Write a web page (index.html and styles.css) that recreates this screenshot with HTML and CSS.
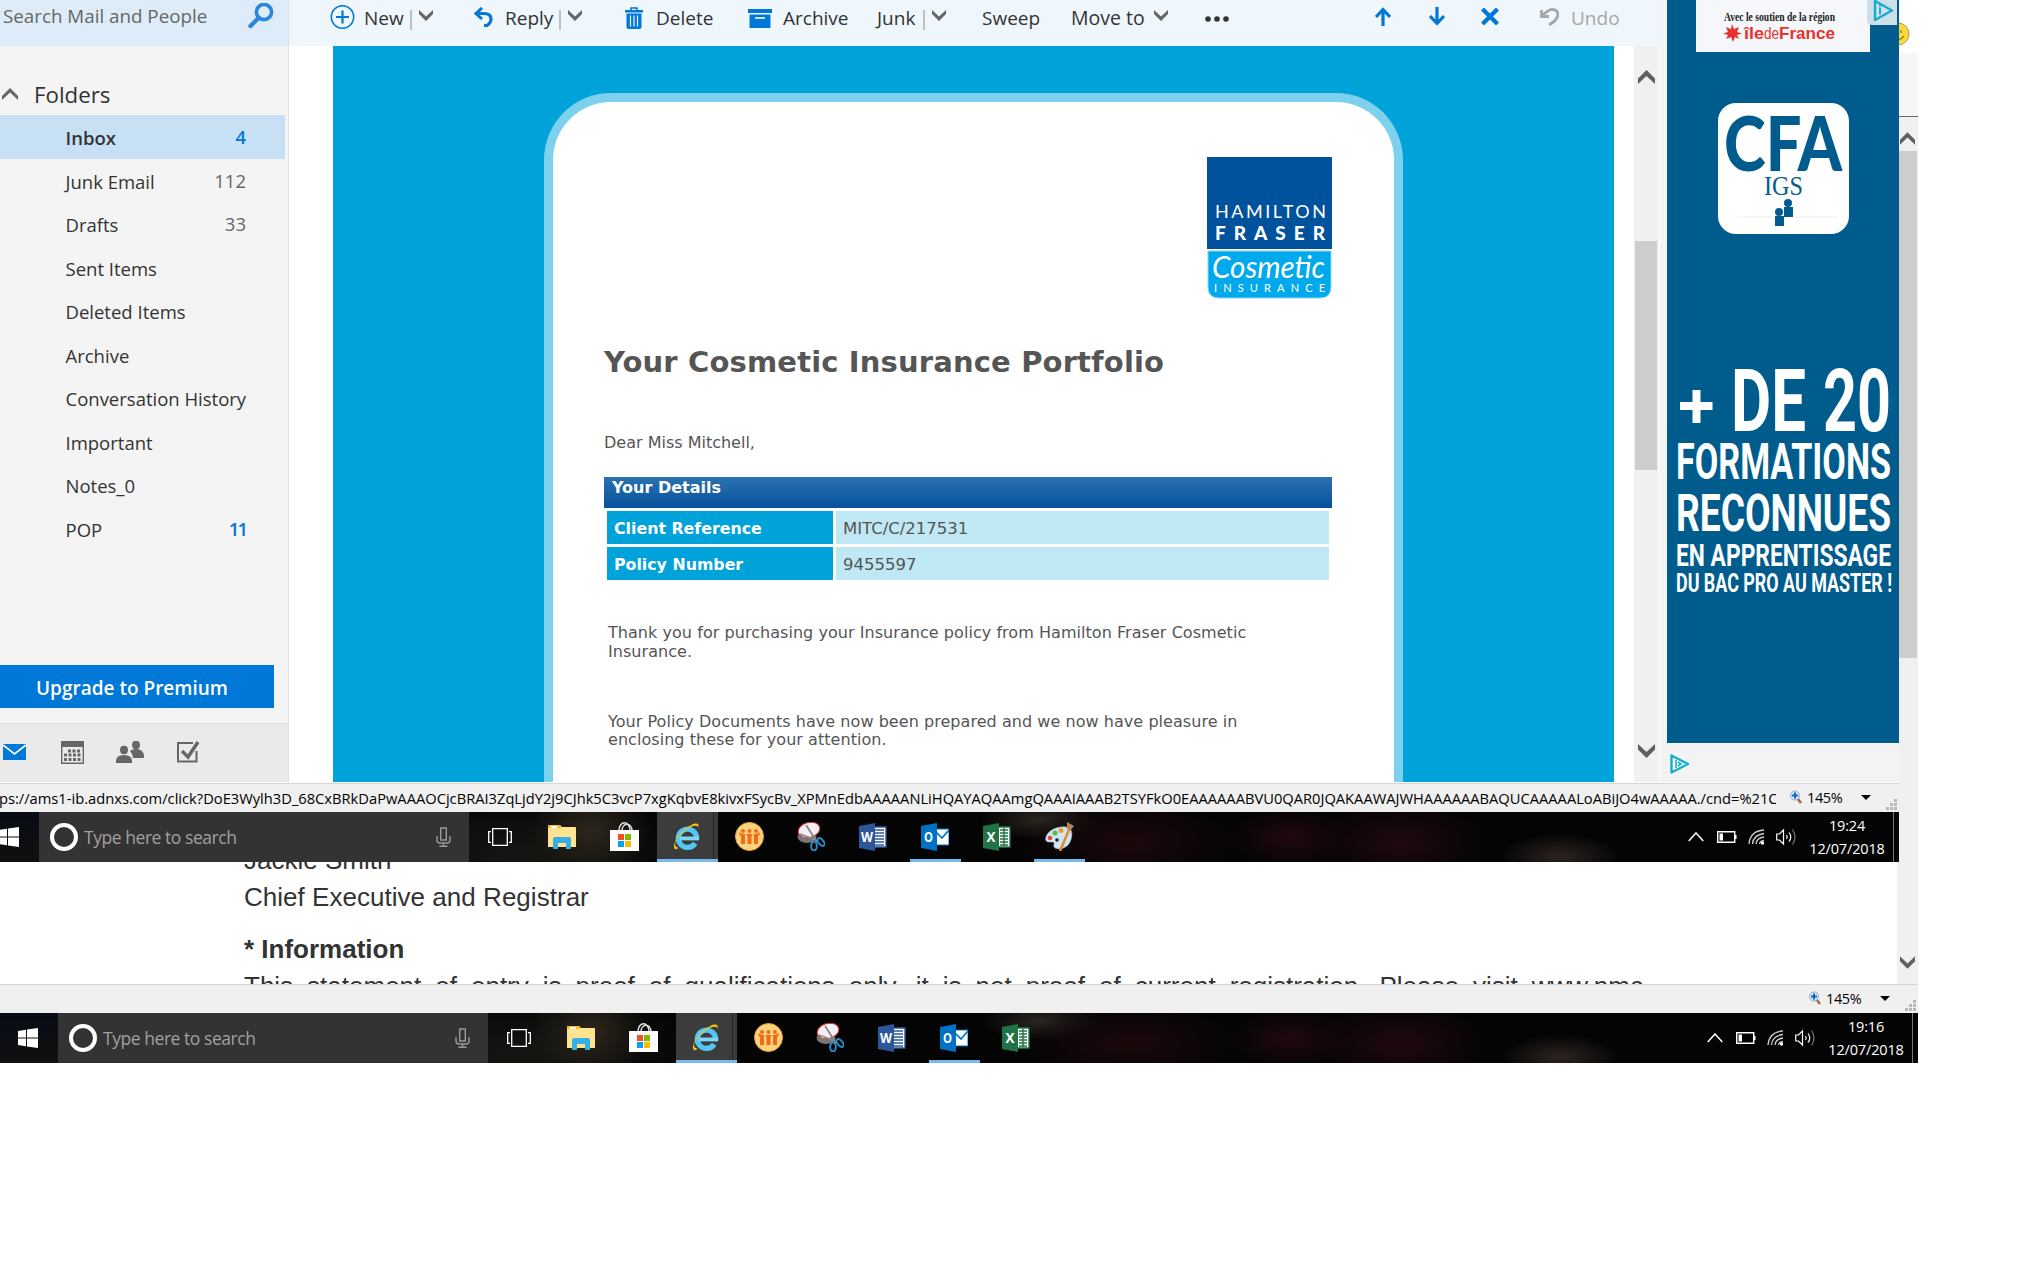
FILE: index.html
```
<!DOCTYPE html>
<html lang="en">
<head>
<meta charset="utf-8">
<title>Mail</title>
<link rel="stylesheet" href="styles.css">
</head>
<body>
<svg class="defs" width="0" height="0">
  <defs>
    <symbol id="chev-down" viewBox="0 0 14 11"><path d="M0 0L7 6.500 14 0V4L7 11 0 4z" fill="#666"/></symbol>
    <symbol id="scroll-up" viewBox="0 0 17 14"><path d="M0 8.500L8.500 0 17 8.500V14L8.500 6 0 14z" fill="#606060"/></symbol>
    <symbol id="scroll-down" viewBox="0 0 17 14"><path d="M0 5.500L8.500 14 17 5.500V0L8.500 8 0 0z" fill="#606060"/></symbol>
    <symbol id="win" viewBox="0 0 20 20"><path d="M0 3L8 1.800V9.500H0zM9 1.600L20 0V9.500H9zM0 10.500H8V18.200L0 17zM9 10.500H20V20L9 18.400z" fill="#fff"/></symbol>
    <symbol id="mic" viewBox="0 0 15 20"><path d="M4.700 1h5.600v12H4.700zM1 9v4q0 3 3 3h7q3 0 3-3V9M7.500 16v3M3.500 19.200h8" fill="none" stroke="#999" stroke-width="1.400"/></symbol>
    <symbol id="task" viewBox="0 0 24 18"><path d="M4.700.700h14.600v16.600H4.700zM3 3.700H.700v10.600H3M21 3.700h2.300v10.600H21" fill="none" stroke="#fff" stroke-width="1.300"/></symbol>
    <symbol id="folder" viewBox="0 0 28 24"><path d="M0 1q0-1 1-1h11l2 2h13q1 0 1 1v19H0z" fill="#ffe391"/><path d="M0 3V1q0-1 1-1h11l1.500 3z" fill="#f6bd2d"/><path d="M3 1h6v2H3z" fill="#fff"/><path d="M5 24V14q0-2 2-2h14q2 0 2 2v10h-5v-6h-8v6z" fill="#34b0e4"/></symbol>
    <symbol id="store" viewBox="0 0 29 29"><path d="M9 9C9-2 20-2 20 9M12 9C12 0 22 0 22 9" fill="none" stroke="#ddd" stroke-width="1.500"/><path d="M0 8h29v21H0z" fill="#fff"/><path d="M8 12h6v6H8z" fill="#f25022"/><path d="M15 12h6v6h-6z" fill="#7fba00"/><path d="M8 19h6v6H8z" fill="#00a4ef"/><path d="M15 19h6v6h-6z" fill="#ffb900"/></symbol>
    <symbol id="ie" viewBox="0 0 30 30"><path d="M25.500 17.500A9.500 9.500 0 1 0 24 22" fill="none" stroke="#53c6f6" stroke-width="5.500"/><path d="M8 17H28" stroke="#7ad8fb" stroke-width="4"/><path d="M3 28C-1 23 8 9 20 3c5-2.500 9-2 7 3C27 2 18 4 10 12S1 25 7 27q-2 1.500-4 1z" fill="#f9c513"/></symbol>
    <symbol id="people3" viewBox="0 0 29 29"><circle cx="14.500" cy="14.500" r="14" fill="#fcd27b" stroke="#e9a03a"/><g fill="#f26a1b"><circle cx="8" cy="9" r="2"/><circle cx="14.500" cy="9" r="2"/><circle cx="21" cy="9" r="2"/><path d="M4 10q2 2 6 2v10H6v-8q-2-1-2-4zM25 10q-2 2-6 2v10h4v-8q2-1 2-4zM11 12h7l-1.500 2v8h-4v-8z"/></g></symbol>
    <symbol id="snip" viewBox="0 0 28 29"><ellipse cx="10" cy="15" rx="9.500" ry="6" fill="#777"/><ellipse cx="12" cy="8" rx="11" ry="7.500" fill="#f3eff2" stroke="#c9333c" transform="rotate(-15 12 8)"/><path d="M9 3L20 20M3 12L19 18" stroke="#888" stroke-width="1.800"/><ellipse cx="17" cy="24" rx="2.800" ry="4.500" fill="none" stroke="#2b8fd0" stroke-width="1.900"/><ellipse cx="24" cy="20" rx="2.500" ry="4.500" fill="none" stroke="#2b8fd0" stroke-width="1.900" transform="rotate(-40 24 20)"/></symbol>
    <symbol id="word" viewBox="0 0 28 28"><path d="M15 4h12v20H15z" fill="#fff" stroke="#2b579a" stroke-width="1.400"/><path d="M16 7h9M16 10h9M16 13h9M16 16h9M16 19h9M16 22h9" stroke="#2b579a" stroke-width="1.300"/><path d="M0 3L16 0V28L0 25z" fill="#2b579a"/><text x="2" y="19" class="glyph" textLength="12" lengthAdjust="spacingAndGlyphs">W</text></symbol>
    <symbol id="outlook" viewBox="0 0 28 28"><path d="M14 6h14v16H14z" fill="#fff" stroke="#0072c6"/><path d="M15 9l6 6 7-8" fill="none" stroke="#0072c6" stroke-width="1.700"/><path d="M0 3L16 0V28L0 25z" fill="#0072c6"/><text x="3" y="19" class="glyph" textLength="9" lengthAdjust="spacingAndGlyphs">O</text></symbol>
    <symbol id="excel" viewBox="0 0 28 28"><path d="M15 4h12v20H15z" fill="#fff" stroke="#217346" stroke-width="1.400"/><path d="M17 7h8M17 10h8M17 13h8M17 16h8M17 19h8M17 22h8M21 5v18" stroke="#217346" stroke-width="1.400"/><path d="M0 3L16 0V28L0 25z" fill="#217346"/><text x="3.500" y="19" class="glyph" textLength="9" lengthAdjust="spacingAndGlyphs">X</text></symbol>
    <symbol id="paint" viewBox="0 0 31 29"><path d="M2 15C4 8 14 4 22 5c7 1 7 9 4 15-3 7-12 8-15 6-3-3 1-5-2-6-3 0-9 1-7-5z" fill="#cfe4f1" stroke="#9dbdd0" stroke-width=".5"/><circle cx="6" cy="16" r="2.300" fill="#e2493b"/><circle cx="11" cy="11" r="2.500" fill="#53b947"/><circle cx="17" cy="8.500" r="2.500" fill="#f49b2c"/><circle cx="13" cy="18" r="1.800" fill="#222"/><path d="M25 8L16 29" stroke="#e58b2f" stroke-width="2.500"/><path d="M23 0l7 4-4 5-3-2z" fill="#b98353"/></symbol>
    <symbol id="t-up" viewBox="0 0 16 10"><path d="M.700 9L8 1 15.300 9" fill="none" stroke="#fff" stroke-width="1.500"/></symbol>
    <symbol id="t-bat" viewBox="0 0 20 12"><path d="M.700.700h17v10.600H.700z" fill="none" stroke="#fff" stroke-width="1.400"/><path d="M18 4h1.500v4H18zM2.500 2.500h3.500v7H2.500z" fill="#fff"/></symbol>
    <symbol id="t-wifi" viewBox="0 0 18 16"><g fill="none" stroke="#ccc" stroke-width="1.300"><path d="M1 15Q2 2 16 1M4.500 15Q5 6 16 4.500M8 15Q8.500 9 16 8M11.500 15Q12 12 16 11.500"/></g><circle cx="14.500" cy="14" r="1.700" fill="#fff"/></symbol>
    <symbol id="t-vol" viewBox="0 0 20 18"><path d="M.700 6H3.500L7.500 2V16L3.500 12H.700z" fill="none" stroke="#fff" stroke-width="1.200"/><path d="M10.500 7q1.500 2 0 4M13 4.500q3.500 4.500 0 9" fill="none" stroke="#fff" stroke-width="1.200"/><path d="M16.500 1.500q5 7.500 0 15" fill="none" stroke="#777" stroke-width="1.200"/></symbol>
    <symbol id="mag" viewBox="0 0 12 14"><path d="M7.500 8.500L11 13" stroke="#a5673b" stroke-width="2.500"/><circle cx="5" cy="5.500" r="4.500" fill="#d9ecfb" stroke="#8ba9c4"/><path d="M5 2.500v6M2 5.500h6" stroke="#1761c4" stroke-width="2"/></symbol>
    <symbol id="grip" viewBox="0 0 12 12"><path d="M8 0h3v3H8zM4 4h3v3H4zM8 4h3v3H8zM0 8h3v3H0zM4 8h3v3H4zM8 8h3v3H8z" fill="#b8b8b8"/></symbol>
  </defs>
</svg>

<main class="desktop">
  <section class="window back">
    <div class="back-body">
      <article class="doc">
        <p>Jackie Smith</p>
        <p class="role">Chief Executive and Registrar</p>
        <h2>* Information</h2>
        <p class="statement">This statement of entry is proof of qualifications only, it is not proof of current registration. Please visit www.nmc</p>
      </article>
      <div class="back-rail">
        <div class="rail-top"><svg width="22" height="24" viewBox="0 0 22 24"><circle cx="-1" cy="12" r="11" fill="#fcd93c" stroke="#a89a58"/><path d="M-4 17Q1 19 5 14M2 8v3" fill="none" stroke="#8d7a20" stroke-width="1.300"/></svg></div>
        <div class="rail-tab"></div>
        <div class="rail-track"><svg class="up" width="15" height="13"><use href="#scroll-up"/></svg><div class="rail-thumb"></div><svg class="down" width="15" height="13"><use href="#scroll-down"/></svg></div>
      </div>
    </div>
    <div class="status"><span class="url"></span><svg width="12" height="14"><use href="#mag"/></svg><span class="pct">145%</span><i class="tri"></i><svg class="grip" width="12" height="12"><use href="#grip"/></svg></div>
    <footer class="taskbar">
      <div class="start"><svg width="20" height="20"><use href="#win"/></svg></div>
      <div class="search-box"><i class="ring"></i><span>Type here to search</span><svg width="15" height="20"><use href="#mic"/></svg></div>
      <div class="tiles">
        <div class="tile"><svg width="24" height="18"><use href="#task"/></svg></div>
        <div class="tile"><svg width="28" height="24"><use href="#folder"/></svg></div>
        <div class="tile"><svg width="29" height="29"><use href="#store"/></svg></div>
        <div class="tile active"><svg width="29" height="29"><use href="#ie"/></svg></div>
        <div class="tile"><svg width="29" height="29"><use href="#people3"/></svg></div>
        <div class="tile"><svg width="28" height="29"><use href="#snip"/></svg></div>
        <div class="tile"><svg width="28" height="28"><use href="#word"/></svg></div>
        <div class="tile open"><svg width="28" height="28"><use href="#outlook"/></svg></div>
        <div class="tile"><svg width="28" height="28"><use href="#excel"/></svg></div>
      </div>
      <div class="tray"><svg width="16" height="10"><use href="#t-up"/></svg><svg width="20" height="12"><use href="#t-bat"/></svg><svg width="18" height="16"><use href="#t-wifi"/></svg><svg width="20" height="18"><use href="#t-vol"/></svg></div>
      <div class="clock"><span>19:16</span><span>12/07/2018</span></div>
    </footer>
  </section>

  <section class="window front">
    <div class="mail">
      <aside class="sidebar">
        <div class="mail-search"><span>Search Mail and People</span><svg width="26" height="26" viewBox="0 0 26 26"><circle cx="16" cy="9" r="7.600" fill="none" stroke="#2b88d8" stroke-width="3.600"/><path d="M10.500 15L2.500 23" stroke="#2b88d8" stroke-width="4.400" stroke-linecap="round"/></svg></div>
        <h3 class="folders-head"><svg width="16" height="12" viewBox="0 0 16 12"><path d="M0 8L8 0 16 8V12L8 4.500 0 12z" fill="#666"/></svg>Folders</h3>
        <ul class="folders">
          <li class="selected"><span>Inbox</span><b>4</b></li>
          <li><span>Junk Email</span><em>112</em></li>
          <li><span>Drafts</span><em>33</em></li>
          <li><span>Sent Items</span></li>
          <li><span>Deleted Items</span></li>
          <li><span>Archive</span></li>
          <li><span>Conversation History</span></li>
          <li><span>Important</span></li>
          <li><span>Notes_0</span></li>
          <li><span>POP</span><b class="tight">11</b></li>
        </ul>
        <div class="upgrade">Upgrade to Premium</div>
        <nav class="apps">
          <svg width="23" height="16" viewBox="0 0 23 16"><path d="M0 0h23v16H0z" fill="#0078d7"/><path d="M0 1l11.500 9L23 1" fill="none" stroke="#fff" stroke-width="1.600"/></svg>
          <svg width="23" height="23" viewBox="0 0 23 23"><path d="M.700.700h21.600v21.600H.700z" fill="none" stroke="#666" stroke-width="1.400"/><path d="M0 0h23v6H0z" fill="#666"/><path d="M7 10h13M3 14h17M3 18.500h17" stroke="#666" stroke-width="3" stroke-dasharray="3 1.500"/></svg>
          <svg width="28" height="22" viewBox="0 0 28 22"><g fill="#666"><ellipse cx="20" cy="4" rx="4" ry="4.200"/><path d="M14 10q2-2 6-2 8 0 8 8v1H17q0-4-3-7z"/><ellipse cx="8" cy="9" rx="4" ry="4.200"/><path d="M0 22v-2q0-6 8-6t8 6v2z"/></g></svg>
          <svg width="23" height="22" viewBox="0 0 23 22"><path d="M16 2H1v18.500h18.500V10" fill="none" stroke="#666" stroke-width="2"/><path d="M5 10l6 6L21 1" fill="none" stroke="#666" stroke-width="3.400"/></svg>
        </nav>
      </aside>

      <div class="reader">
        <header class="toolbar">
          <div class="tool t-new"><svg width="25" height="24" viewBox="0 0 25 24"><circle cx="12.500" cy="12" r="11.200" fill="none" stroke="#0078d7" stroke-width="1.500"/><path d="M12.500 5.500v13M6 12h13" stroke="#0078d7" stroke-width="2.200"/></svg><span>New</span><i></i><svg class="chev" width="14" height="11"><use href="#chev-down"/></svg></div>
          <div class="tool t-reply"><svg width="20" height="20" viewBox="0 0 20 20"><path d="M2 6.500h9q7 0 7 5.500 0 4-4 6.500h-3" fill="none" stroke="#0078d7" stroke-width="3.200"/><path d="M9 1L3 6.500 9 12" fill="none" stroke="#0078d7" stroke-width="3"/></svg><span>Reply</span><i></i><svg class="chev" width="14" height="11"><use href="#chev-down"/></svg></div>
          <div class="tool t-delete"><svg width="18" height="23" viewBox="0 0 18 23"><path d="M0 3h18v2.500H0z" fill="#0078d7"/><path d="M6 3V1h6v2" fill="none" stroke="#0078d7" stroke-width="1.600"/><path d="M1.500 6.500h15v13.500q0 2-2 2h-11q-2 0-2-2z" fill="#0078d7"/><path d="M5.500 8.500v11M9 8.500v11M12.500 8.500v11" stroke="#eff6fc" stroke-width="1.200"/></svg><span>Delete</span></div>
          <div class="tool t-archive"><svg width="24" height="19" viewBox="0 0 24 19"><path d="M0 0h24v4H0zM1.500 5.500h21V19h-21z" fill="#0078d7"/><path d="M7 9h10" stroke="#fff" stroke-width="1.600"/></svg><span>Archive</span></div>
          <div class="tool t-junk"><span>Junk</span><i></i><svg class="chev" width="14" height="11"><use href="#chev-down"/></svg></div>
          <div class="tool t-sweep"><span>Sweep</span></div>
          <div class="tool t-move"><span>Move to</span><svg class="chev" width="14" height="11"><use href="#chev-down"/></svg></div>
          <div class="tool t-more"><svg width="24" height="6"><g fill="#333"><circle cx="3" cy="3" r="2.800"/><circle cx="12" cy="3" r="2.800"/><circle cx="21" cy="3" r="2.800"/></g></svg></div>
          <div class="tool t-up"><svg width="16" height="19" viewBox="0 0 16 19"><path d="M8 19V2M1 10L8 2.500l7 7.500" fill="none" stroke="#0078d7" stroke-width="3.200"/></svg></div>
          <div class="tool t-down"><svg width="16" height="19" viewBox="0 0 16 19"><path d="M8 0v17M1 9L8 16.500l7-7.500" fill="none" stroke="#0078d7" stroke-width="3.200"/></svg></div>
          <div class="tool t-close"><svg width="18" height="17" viewBox="0 0 18 17"><path d="M1.500 1l15 15M16.500 1l-15 15" stroke="#0078d7" stroke-width="4.200"/></svg></div>
          <div class="tool t-undo"><svg width="19" height="18" viewBox="0 0 19 18"><path d="M1.500 2v6.500h7.500M2 8.500Q8 1 13 1.500q6 1 4.500 7Q16 13 9 17" fill="none" stroke="#a6a6a6" stroke-width="2.800"/></svg><span>Undo</span></div>
        </header>
        <div class="reader-body">
          <div class="canvas">
            <article class="card">
              <svg class="logo" width="125" height="142" viewBox="0 0 125 142">
                <path d="M0 0h125v92H0z" fill="#00529c"/>
                <path d="M1 94h123v36q0 11-11 11H12Q1 141 1 130z" fill="#00a9ec" stroke="#8bd6f5"/>
                <g fill="#fff"><text class="lg-thin" x="8" y="61" textLength="111">HAMILTON</text><text class="lg-bold" x="8" y="83" textLength="110">FRASER</text><text class="lg-script" x="5" y="121" textLength="113" lengthAdjust="spacingAndGlyphs">Cosmetic</text><text class="lg-small" x="7" y="135" textLength="111">INSURANCE</text></g>
              </svg>
              <h1>Your Cosmetic Insurance Portfolio</h1>
              <p class="dear">Dear Miss Mitchell,</p>
              <div class="details-head">Your Details</div>
              <dl class="details"><dt>Client Reference</dt><dd>MITC/C/217531</dd><dt>Policy Number</dt><dd>9455597</dd></dl>
              <p class="para">Thank you for purchasing your Insurance policy from Hamilton Fraser Cosmetic<br>Insurance.</p>
              <p class="para second">Your Policy Documents have now been prepared and we now have pleasure in<br>enclosing these for your attention.</p>
            </article>
          </div>
          <div class="scroll"><svg class="up" width="17" height="14"><use href="#scroll-up"/></svg><div class="thumb"></div><svg class="down" width="17" height="14"><use href="#scroll-down"/></svg></div>
        </div>
      </div>

      <aside class="ads">
        <svg width="232" height="743" viewBox="0 0 232 743">
          <path d="M0 0h232v743H0z" fill="#005c8d"/>
          <path d="M29 0h174v52H29z" fill="#f5f7fa"/>
          <text class="ad-avec" x="57" y="21" textLength="111" lengthAdjust="spacingAndGlyphs">Avec le soutien de la région</text>
          <path d="M65 24l2 5 5-2-2 5 5 1.500-5 1.500 2 4-4-2-2 5-2-5-5 2 2-4-5-1.500 5-1.500-2-5 5 2z" fill="#e5332d"/>
          <g class="ad-region"><text x="77" y="39" textLength="20" lengthAdjust="spacingAndGlyphs">île</text><text class="light" x="97" y="39" textLength="15" lengthAdjust="spacingAndGlyphs">de</text><text x="112" y="39" textLength="56" lengthAdjust="spacingAndGlyphs">France</text></g>
          <path d="M200 0h30v25h-24q-6 0-6-6z" fill="#cddfe8"/>
          <path d="M208 1v19l17-9.500z" fill="none" stroke="#14aecb" stroke-width="2.400" stroke-linejoin="round"/><path d="M213 7.500v7M213 4.500v2" stroke="#14aecb" stroke-width="2"/>
          <rect x="51" y="103" width="131" height="131" rx="18" fill="#fff"/>
          <g fill="#005c8d"><text class="ad-cfa" x="57" y="171" textLength="118" lengthAdjust="spacingAndGlyphs">CFA</text><text class="ad-igs" x="97" y="195" textLength="39" lengthAdjust="spacingAndGlyphs">IGS</text><circle cx="121" cy="203" r="4"/><path d="M117 207h9v10h-9z"/><circle cx="112" cy="212" r="4"/><path d="M108 216h9v10h-9z"/></g>
          <path d="M70 217h37M127 217h44" stroke="#e7eff5"/>
          <g fill="#fff" class="ad-copy">
            <path d="M25.500 390h8v12h12v8h-12v13h-8v-13H13v-8h12.500z"/>
            <text x="64" y="431" font-size="87" textLength="75" lengthAdjust="spacingAndGlyphs">DE</text>
            <text x="156" y="431" font-size="87" textLength="68" lengthAdjust="spacingAndGlyphs">20</text>
            <text x="9" y="479" font-size="50" textLength="215" lengthAdjust="spacingAndGlyphs">FORMATIONS</text>
            <text x="9" y="531" font-size="52" textLength="215" lengthAdjust="spacingAndGlyphs">RECONNUES</text>
            <text x="9" y="566" font-size="32" textLength="215" lengthAdjust="spacingAndGlyphs">EN APPRENTISSAGE</text>
            <text x="9" y="592" font-size="26" textLength="216" lengthAdjust="spacingAndGlyphs">DU BAC PRO AU MASTER !</text>
          </g>
        </svg>
        <svg class="choices" width="20" height="20" viewBox="0 0 20 20"><path d="M1.500 1.500v17L18 10z" fill="#fff" stroke="#14aecb" stroke-width="2.400" stroke-linejoin="round"/><path d="M6 6v8M8 8l3 2-3 2" fill="none" stroke="#14aecb" stroke-width="1.600"/></svg>
      </aside>
    </div>
    <div class="status"><span class="url">ps://ams1-ib.adnxs.com/click?DoE3Wylh3D_68CxBRkDaPwAAAOCjcBRAI3ZqLjdY2j9CJhk5C3vcP7xgKqbvE8kivxFSycBv_XPMnEdbAAAAANLiHQAYAQAAmgQAAAIAAAB2TSYFkO0EAAAAAABVU0QAR0JQAKAAWAJWHAAAAAABAQUCAAAAALoABiJO4wAAAAA./cnd=%21C</span><svg width="12" height="14"><use href="#mag"/></svg><span class="pct">145%</span><i class="tri"></i><svg class="grip" width="12" height="12"><use href="#grip"/></svg></div>
    <footer class="taskbar">
      <div class="start"><svg width="20" height="20"><use href="#win"/></svg></div>
      <div class="search-box"><i class="ring"></i><span>Type here to search</span><svg width="15" height="20"><use href="#mic"/></svg></div>
      <div class="tiles">
        <div class="tile"><svg width="24" height="18"><use href="#task"/></svg></div>
        <div class="tile"><svg width="28" height="24"><use href="#folder"/></svg></div>
        <div class="tile"><svg width="29" height="29"><use href="#store"/></svg></div>
        <div class="tile active"><svg width="29" height="29"><use href="#ie"/></svg></div>
        <div class="tile"><svg width="29" height="29"><use href="#people3"/></svg></div>
        <div class="tile"><svg width="28" height="29"><use href="#snip"/></svg></div>
        <div class="tile"><svg width="28" height="28"><use href="#word"/></svg></div>
        <div class="tile open"><svg width="28" height="28"><use href="#outlook"/></svg></div>
        <div class="tile"><svg width="28" height="28"><use href="#excel"/></svg></div>
        <div class="tile open"><svg width="31" height="29"><use href="#paint"/></svg></div>
      </div>
      <div class="tray"><svg width="16" height="10"><use href="#t-up"/></svg><svg width="20" height="12"><use href="#t-bat"/></svg><svg width="18" height="16"><use href="#t-wifi"/></svg><svg width="20" height="18"><use href="#t-vol"/></svg></div>
      <div class="clock"><span>19:24</span><span>12/07/2018</span></div>
    </footer>
  </section>
</main>
</body>
</html>
```
FILE: styles.css
```
* { box-sizing: border-box; }
body { margin: 0; background: #fff; overflow: hidden; font-family: "Open Sans", "Noto Sans", sans-serif; color: #333; }
h1, h2, h3, p, ul, dl, dd { margin: 0; padding: 0; }
svg { display: block; flex: none; }
.defs { position: absolute; }
.glyph { font: 700 15px "Open Sans", sans-serif; fill: #fff; }

.desktop { position: relative; width: 2036px; height: 1280px; }
.window { position: absolute; left: 0; top: 0; display: flex; flex-direction: column; overflow: hidden; background: #fff; }
.back { width: 1918px; height: 1063px; }
.front { width: 1899px; height: 862px; }

/* document window behind */
.back-body { height: 984px; display: flex; overflow: hidden; }
.doc { width: 1897px; padding: 844px 0 0 244px; font: 26px/32px "Liberation Sans", Arial, sans-serif; color: #333; overflow: hidden; white-space: nowrap; }
.doc .role { margin-top: 5px; letter-spacing: .03px; }
.doc h2 { font-size: 26px; line-height: 32px; margin-top: 20px; }
.doc .statement { margin-top: 5px; width: 1399px; text-align: justify; text-align-last: justify; white-space: normal; height: 32px; }
.back-rail { width: 21px; display: flex; flex-direction: column; }
.rail-top { height: 53px; padding: 22px 0 0 2px; }
.rail-tab { height: 64px; background: #f6f6f6; border-bottom: 1px solid #6a6a6a; }
.rail-track { flex: 1; background: #f0f0f0; padding: 15px 1px 15px 3px; display: flex; flex-direction: column; }
.rail-thumb { height: 507px; margin: 6px 0 0 -3px; background: #cdcdcd; }
.rail-track .down { margin-top: auto; }

/* status bar */
.status { height: 29px; display: flex; align-items: center; background: #f0f0f0; border-top: 1px solid #d6d6d6; padding: 0 1px 2px 0; color: #000; flex: none; }
.url { flex: 1; overflow: hidden; white-space: nowrap; font-size: 14.700px; line-height: 24px; margin: 2px 14px 0 -1px; }
.pct { font-size: 14.500px; letter-spacing: -.4px; width: 54px; margin-left: 5px; }
.tri { width: 10px; border: 5px solid transparent; border-top-color: #000; border-bottom: 0; margin-right: 15px; }
.grip { align-self: flex-end; margin-bottom: -1px; }

/* taskbar */
.taskbar { height: 50px; display: flex; flex: none; color: #fff; background:
  radial-gradient(60px 22px at 1560px 44px, #2c2420, transparent),
  radial-gradient(90px 40px at 1400px 30px, #210811, transparent),
  radial-gradient(60px 30px at 1290px 26px, #210811, transparent),
  radial-gradient(110px 40px at 1130px 30px, #1c080b, transparent),
  radial-gradient(60px 20px at 1040px 8px, #2a2620, transparent),
  radial-gradient(60px 50px at 590px 18px, #2c261c, transparent),
  radial-gradient(200px 60px at 520px 40px, #151512, transparent), #040405; }
.start { width: 39px; display: flex; align-items: center; background: linear-gradient(#070c15, #101010); }
.front .start svg { margin-left: -1px; }
.back .start { width: 58px; padding-left: 18px; }
.search-box { width: 430px; background: #333; display: flex; align-items: center; padding: 0 18px 0 11px; color: #a0a0a0; }
.search-box span { flex: 1; font-size: 17.500px; letter-spacing: -.45px; margin: 0 0 0 6px; }
.ring { width: 28px; height: 28px; border: 4px solid #fff; border-radius: 50%; }
.tiles { display: flex; }
.tile { width: 62px; display: flex; align-items: center; justify-content: center; border-bottom: 3px solid transparent; padding-top: 2px; }
.tile.active { width: 61px; margin-left: 2px; padding-right: 2px; background: linear-gradient(90deg, #3c3c3c 56px, #222 56px, #222 57px, #3a3a3a 57px); border-bottom-color: #76b9ed; }
.tile.open { background: linear-gradient(#76b9ed, #76b9ed) center bottom / 51px 3px no-repeat border-box; }
.tray { margin-left: auto; display: flex; align-items: center; margin-right: 14px; }
.tray svg:nth-child(2) { margin-left: 13px; }
.tray svg:nth-child(3) { margin-left: 11px; }
.tray svg:nth-child(4) { margin-left: 10px; }
.clock { width: 90px; display: flex; flex-direction: column; align-items: center; font-size: 14.500px; letter-spacing: -.15px; line-height: 23px; padding: 2px 3px 0 0; border-right: 1px solid #777; margin-right: 5px; margin-left: -6px; }

/* mail window */
.mail { height: 783px; display: flex; border-bottom: 1px solid #fff; }
.sidebar { width: 289px; display: flex; flex-direction: column; background: #f4f4f4; border-right: 1px solid #e1e1e1; }
.mail-search { height: 46px; background: #deecf9; display: flex; padding: 3px 14px 0 3px; justify-content: space-between; font-size: 18.800px; line-height: 26px; color: #666; }
.folders-head { display: flex; align-items: center; height: 69px; padding: 27px 0 0 2px; gap: 16px; font-weight: 400; font-size: 22.300px; color: #333; }
.folders { list-style: none; }
.folders li { height: 43.500px; width: 285px; display: flex; justify-content: space-between; padding: 0 39px 0 65.500px; font-size: 18.500px; line-height: 45px; white-space: nowrap; }
.folders em { font-style: normal; color: #666; line-height: 43px; }
.folders b { font-weight: 600; color: #0078d7; line-height: 43px; }
.folders .tight { letter-spacing: -2px; }
.folders .selected { background: #c7e0f4; font-weight: 600; }
.upgrade { margin-top: 115px; width: 274px; height: 43px; background: #0078d7; color: #fff; font-weight: 600; font-size: 19px; line-height: 46px; padding-left: 36px; }
.apps { margin-top: 15px; flex: 1; border-top: 1px solid #dcdcdc; background: #eaeaea; display: flex; align-items: center; padding: 0 0 2px 3px; }
.apps svg:nth-child(2) { margin-left: 35px; }
.apps svg:nth-child(3) { margin-left: 32px; }
.apps svg:nth-child(4) { margin-left: 33px; }

.reader { width: 1371px; display: flex; flex-direction: column; }
.toolbar { height: 46px; background: #eff6fc; display: flex; padding: 0 0 9px 41px; font-size: 19px; }
.tool { display: flex; align-items: center; }
.tool span { white-space: nowrap; line-height: 30px; margin-top: -1px; }
.tool i { width: 2px; height: 20px; background: #c0c0c0; margin: 3px 7px 0 auto; }
.tool .chev { margin-bottom: 6px; }
.t-new { width: 103px; margin-right: 40px; }
.t-new span { margin-left: 9px; margin-top: -1px; }
.t-new svg:first-child, .t-reply svg:first-child { margin-bottom: 4px; }
.t-reply { width: 109px; margin-right: 43px; }
.t-reply span { margin-left: 12px; }
.t-delete { width: 123px; gap: 13px; }
.t-archive { width: 129px; gap: 11px; }
.t-junk { width: 69px; margin-right: 36px; }
.t-sweep { width: 89px; }
.t-move { width: 97px; justify-content: space-between; margin-right: 37px; font-size: 19.500px; }
.t-more { width: 170px; }
.t-up { width: 54px; }
.t-down { width: 52px; }
.t-close { width: 59px; }
.t-undo { gap: 12px; color: #a6a6a6; }
.t-up svg, .t-down svg, .t-close svg, .t-undo svg { margin-bottom: 4px; }

.reader-body { flex: 1; display: flex; }
.canvas { width: 1281px; height: 736px; margin: 0 20px 0 44px; background: #00a2da; padding: 47px 0 0 211px; overflow: hidden; }
.card { width: 859px; height: 780px; border: 9px solid #7dd1ed; border-bottom: 0; border-radius: 67px 67px 0 0; background: #fff; padding: 55px 62px 0 51px; font-family: "DejaVu Sans", Verdana, sans-serif; font-size: 16px; color: #555; }
.logo { margin-left: auto; }
.lg-thin { font: 400 18px Lato, sans-serif; }
.lg-bold { font: 900 19px Lato, sans-serif; }
.lg-script { font: italic 400 31px Lato, sans-serif; }
.lg-small { font: 400 11px Lato, sans-serif; }
.card h1 { font-size: 29px; line-height: 36px; margin-top: 45px; letter-spacing: .15px; white-space: nowrap; }
.dear { margin-top: 53px; line-height: 20px; }
.details-head { margin-top: 24px; height: 31px; width: 728px; background: linear-gradient(#2c72b0, #04529c); color: #fff; font-weight: 700; line-height: 21px; padding-left: 8px; }
.details { display: grid; grid-template-columns: 226px 493px; grid-auto-rows: 33px; gap: 3px; margin: 3px 0 0 3px; line-height: 35px; }
.details dt { background: #00a2da; color: #fff; font-weight: 700; padding-left: 7px; font-size: 15.800px; }
.details dd { background: #bfe8f4; padding-left: 7px; font-size: 16.500px; }
.para { margin: 44px 0 0 4px; line-height: 18.500px; letter-spacing: .05px; white-space: nowrap; }
.para.second { margin-top: 52px; line-height: 18px; }

.scroll { width: 25px; height: 736px; background: #f0f0f0; display: flex; flex-direction: column; padding: 24px 4px; }
.thumb { width: 22px; height: 229px; margin: 157px 0 0 -3px; background: #cdcdcd; }
.scroll .down { margin-top: auto; }

.ads { flex: 1; background: #f3f3f3; padding-left: 7px; }
.choices { margin: 11px 0 0 3px; }
.ad-avec { font: 700 12px "Liberation Serif", serif; fill: #222; }
.ad-region { font: 700 17px "Liberation Sans", sans-serif; fill: #e5332d; }
.ad-region .light { font-weight: 400; }
.ad-cfa { font: 900 77px Lato, sans-serif; }
.ad-igs { font: 400 28px "Liberation Serif", serif; }
.ad-copy text { font-family: Roboto, sans-serif; font-weight: 700; }
```
